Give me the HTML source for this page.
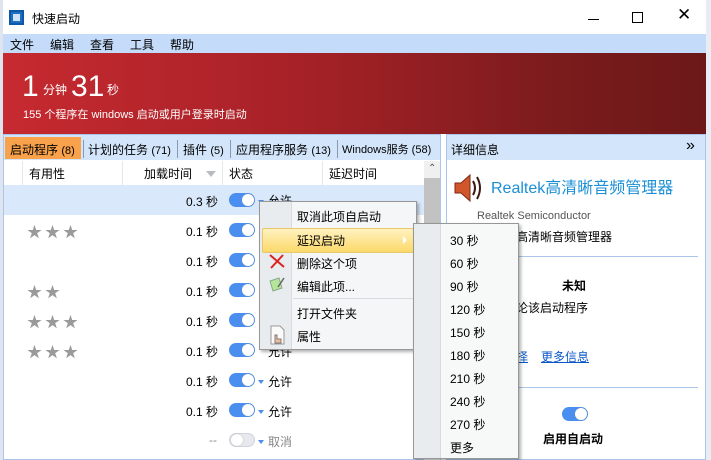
<!DOCTYPE html>
<html><head><meta charset="utf-8"><style>
*{margin:0;padding:0;box-sizing:border-box}
body{width:711px;height:460px;overflow:hidden;background:#fff;font-family:"Liberation Sans","Noto Sans CJK SC",sans-serif;font-size:12px;color:#000;position:relative}
.a{position:absolute;white-space:nowrap}
.tog{position:absolute;width:26px;height:14px;border-radius:7px;background:#4a8ff0}
.tog::after{content:"";position:absolute;right:1px;top:1px;width:12px;height:12px;border-radius:6px;background:#fff;box-shadow:0 0 1px #888}
.tog.off{background:#e6e9ee;border:1px solid #cfd4da}
.tog.off::after{left:1px;right:auto;top:0}
.dd{position:absolute;width:0;height:0;border-left:3px solid transparent;border-right:3px solid transparent;border-top:4px solid #4a8ff0}
.st{color:#9a9a9a;font-size:15px;letter-spacing:3px}
</style></head><body>
<div class="a" style="left:0;top:0;width:3px;height:460px;background:#dfe5ee"></div>
<div class="a" style="left:706px;top:0;width:5px;height:460px;background:#e9edf3"></div>
<div class="a" style="left:9px;top:10px;width:15px;height:15px;background:#1d6fc2;border:2px solid #0e58a8"><div style="margin:2px;width:7px;height:7px;background:#cfe3f8"></div></div>
<div class="a" style="left:32px;top:10px;font-size:12px">快速启动</div>
<div class="a" style="left:588px;top:19px;width:11px;height:1px;background:#000"></div>
<div class="a" style="left:632px;top:12px;width:11px;height:11px;border:1px solid #000"></div>
<div class="a" style="left:677px;top:5px;font-size:17px">✕</div>
<div class="a" style="left:3px;top:34px;width:703px;height:19px;background:#c4dcfa"></div>
<div class="a" style="left:10px;top:36px">文件</div>
<div class="a" style="left:50px;top:36px">编辑</div>
<div class="a" style="left:90px;top:36px">查看</div>
<div class="a" style="left:130px;top:36px">工具</div>
<div class="a" style="left:170px;top:36px">帮助</div>
<div class="a" style="left:3px;top:53px;width:703px;height:81px;background:linear-gradient(90deg,#c62a30 0%,#a82228 40%,#7a1b1c 80%,#6c1819 100%)"></div>
<div class="a" style="left:22px;top:70px;color:#fff;font-size:30px">1</div>
<div class="a" style="left:43px;top:81px;color:#fff;font-size:12px">分钟</div>
<div class="a" style="left:71px;top:70px;color:#fff;font-size:30px">31</div>
<div class="a" style="left:107px;top:81px;color:#fff;font-size:12px">秒</div>
<div class="a" style="left:23px;top:106px;color:#fff;font-size:11px">155 个程序在 windows 启动或用户登录时启动</div>
<div class="a" style="left:3px;top:134px;width:438px;height:326px;border:1px solid #a9c6ea;background:#fff"></div>
<div class="a" style="left:4px;top:135px;width:436px;height:25px;background:#d3e5fa"></div>
<div class="a" style="left:5px;top:137px;width:76px;height:22px;background:#f9a24b"></div>
<div class="a" style="left:10px;top:141px">启动程序 <span style="font-size:11px">(8)</span></div>
<div class="a" style="left:83px;top:140px;width:1px;height:18px;background:#8a9aab"></div>
<div class="a" style="left:88px;top:141px">计划的任务 <span style="font-size:11px">(71)</span></div>
<div class="a" style="left:177px;top:140px;width:1px;height:18px;background:#8a9aab"></div>
<div class="a" style="left:183px;top:141px">插件 <span style="font-size:11px">(5)</span></div>
<div class="a" style="left:230px;top:140px;width:1px;height:18px;background:#8a9aab"></div>
<div class="a" style="left:236px;top:141px">应用程序服务 <span style="font-size:11px">(13)</span></div>
<div class="a" style="left:337px;top:140px;width:1px;height:18px;background:#8a9aab"></div>
<div class="a" style="left:342px;top:141px;font-size:11px">Windows服务 (58)</div>
<div class="a" style="left:22px;top:161px;width:1px;height:24px;background:#e4e8ee"></div>
<div class="a" style="left:29px;top:165px">有用性</div>
<div class="a" style="left:122px;top:161px;width:1px;height:24px;background:#e4e8ee"></div>
<div class="a" style="left:144px;top:165px">加载时间</div>
<div class="a" style="left:206px;top:171px;width:0;height:0;border-left:5px solid transparent;border-right:5px solid transparent;border-top:6px solid #b8bcc2"></div>
<div class="a" style="left:222px;top:161px;width:1px;height:24px;background:#e4e8ee"></div>
<div class="a" style="left:229px;top:165px">状态</div>
<div class="a" style="left:322px;top:161px;width:1px;height:24px;background:#e4e8ee"></div>
<div class="a" style="left:329px;top:165px">延迟时间</div>
<div class="a" style="left:424px;top:161px;width:16px;height:299px;background:#f0f0f0"></div>
<div class="a" style="left:424px;top:178px;width:16px;height:50px;background:#c2c2c2"></div>
<div class="a" style="left:428px;top:163px;font-size:10px;color:#555">⌃</div>
<div class="a" style="left:4px;top:185px;width:420px;height:30px;background:#d9e8fa"></div>
<div class="a" style="left:186px;top:193px">0.3 秒</div><div class="tog" style="left:229px;top:193px"></div><div class="dd" style="left:258px;top:200px"></div><div class="a" style="left:268px;top:192px">允许</div>
<div class="a st" style="left:27px;top:221px">★★★</div>
<div class="a" style="left:186px;top:223px">0.1 秒</div><div class="tog" style="left:229px;top:223px"></div>
<div class="a" style="left:186px;top:253px">0.1 秒</div><div class="tog" style="left:229px;top:253px"></div>
<div class="a st" style="left:27px;top:281px">★★</div>
<div class="a" style="left:186px;top:283px">0.1 秒</div><div class="tog" style="left:229px;top:283px"></div>
<div class="a st" style="left:27px;top:311px">★★★</div>
<div class="a" style="left:186px;top:313px">0.1 秒</div><div class="tog" style="left:229px;top:313px"></div>
<div class="a st" style="left:27px;top:341px">★★★</div>
<div class="a" style="left:186px;top:343px">0.1 秒</div><div class="tog" style="left:229px;top:343px"></div><div class="a" style="left:268px;top:343px">允许</div>
<div class="a" style="left:186px;top:373px">0.1 秒</div><div class="tog" style="left:229px;top:373px"></div><div class="dd" style="left:258px;top:380px"></div><div class="a" style="left:268px;top:373px">允许</div>
<div class="a" style="left:186px;top:403px">0.1 秒</div><div class="tog" style="left:229px;top:403px"></div><div class="dd" style="left:258px;top:410px"></div><div class="a" style="left:268px;top:403px">允许</div>
<div class="a" style="left:209px;top:433px;color:#888">--</div><div class="tog off" style="left:229px;top:433px"></div><div class="dd" style="left:258px;top:440px"></div><div class="a" style="left:268px;top:433px;color:#888">取消</div>
<div class="a" style="left:446px;top:134px;width:260px;height:326px;border:1px solid #a9c6ea;background:#fff"></div>
<div class="a" style="left:447px;top:135px;width:258px;height:25px;background:#d3e5fa"></div>
<div class="a" style="left:451px;top:141px">详细信息</div>
<div class="a" style="left:686px;top:137px;font-size:16px">»</div>
<svg class="a" style="left:453px;top:172px" width="30" height="32" viewBox="0 0 30 32"><path d="M2 11h6l9-8v26l-9-8H2z" fill="#d2562c" stroke="#7a2a10"/><path d="M20 9q4 7 0 14M24 5q6 11 0 22" stroke="#3a1a10" stroke-width="2" fill="none"/></svg>
<div class="a" style="left:491px;top:174px;font-size:16px;color:#1a8fd6">Realtek高清晰音频管理器</div>
<div class="a" style="left:477px;top:210px;font-size:11px;color:#555">Realtek Semiconductor</div>
<div class="a" style="left:516px;top:228px">高清晰音频管理器</div>
<div class="a" style="left:460px;top:256px;width:238px;height:1px;background:#a9c6ea"></div>
<div class="a" style="left:562px;top:277px;font-weight:bold">未知</div>
<div class="a" style="left:516px;top:299px">论该启动程序</div>
<div class="a" style="left:516px;top:348px;color:#0a58c8;text-decoration:underline">择</div>
<div class="a" style="left:541px;top:348px;color:#0a58c8;text-decoration:underline">更多信息</div>
<div class="a" style="left:460px;top:387px;width:238px;height:1px;background:#a9c6ea"></div>
<div class="tog" style="left:562px;top:407px"></div>
<div class="a" style="left:543px;top:430px;font-weight:bold">启用自启动</div>
<div class="a" style="left:259px;top:201px;width:158px;height:149px;background:#f5f6f7;border:1px solid #979797;box-shadow:2px 2px 3px rgba(0,0,0,.3)"></div>
<div class="a" style="left:260px;top:202px;width:32px;height:147px;background:#e9ecee;border-right:1px solid #d8dcdf"></div>
<div class="a" style="left:297px;top:208px">取消此项自启动</div>
<div class="a" style="left:262px;top:228px;width:152px;height:25px;border:1px solid #e8c86a;border-radius:2px;background:linear-gradient(#fff2c0,#fcd96a)"></div>
<div class="a" style="left:297px;top:232px">延迟启动</div>
<div class="a" style="left:403px;top:236px;width:0;height:0;border-top:4px solid transparent;border-bottom:4px solid transparent;border-left:4px solid #fff"></div>
<svg class="a" style="left:268px;top:253px" width="18" height="16"><path d="M2 2L16 14M15 2L3 15" stroke="#d22" stroke-width="2"/></svg>
<div class="a" style="left:297px;top:255px">删除这个项</div>
<svg class="a" style="left:268px;top:275px" width="18" height="18"><path d="M2 6l9-3 3 10-9 3z" fill="#b5e59a" stroke="#8a8" /><path d="M10 12l6-9" stroke="#666" stroke-width="1.5"/></svg>
<div class="a" style="left:297px;top:278px">编辑此项...</div>
<div class="a" style="left:293px;top:298px;width:122px;height:1px;background:#d8dcdf"></div>
<div class="a" style="left:297px;top:305px">打开文件夹</div>
<svg class="a" style="left:268px;top:325px" width="18" height="20"><path d="M3 1h9l4 4v14H3z" fill="#fafafa" stroke="#999"/><path d="M7 18v-8h2v4h4v4z" fill="#e8c0a0" stroke="#877"/></svg>
<div class="a" style="left:297px;top:328px">属性</div>
<div class="a" style="left:413px;top:223px;width:106px;height:236px;background:#f7f8f8;border:1px solid #979797;box-shadow:2px 2px 3px rgba(0,0,0,.3)"></div>
<div class="a" style="left:414px;top:224px;width:27px;height:234px;background:#e9ecee;border-right:1px solid #d8dcdf"></div>
<div class="a" style="left:450px;top:232px">30 秒</div>
<div class="a" style="left:450px;top:255px">60 秒</div>
<div class="a" style="left:450px;top:278px">90 秒</div>
<div class="a" style="left:450px;top:301px">120 秒</div>
<div class="a" style="left:450px;top:324px">150 秒</div>
<div class="a" style="left:450px;top:347px">180 秒</div>
<div class="a" style="left:450px;top:370px">210 秒</div>
<div class="a" style="left:450px;top:393px">240 秒</div>
<div class="a" style="left:450px;top:416px">270 秒</div>
<div class="a" style="left:450px;top:439px">更多</div>
</body></html>
